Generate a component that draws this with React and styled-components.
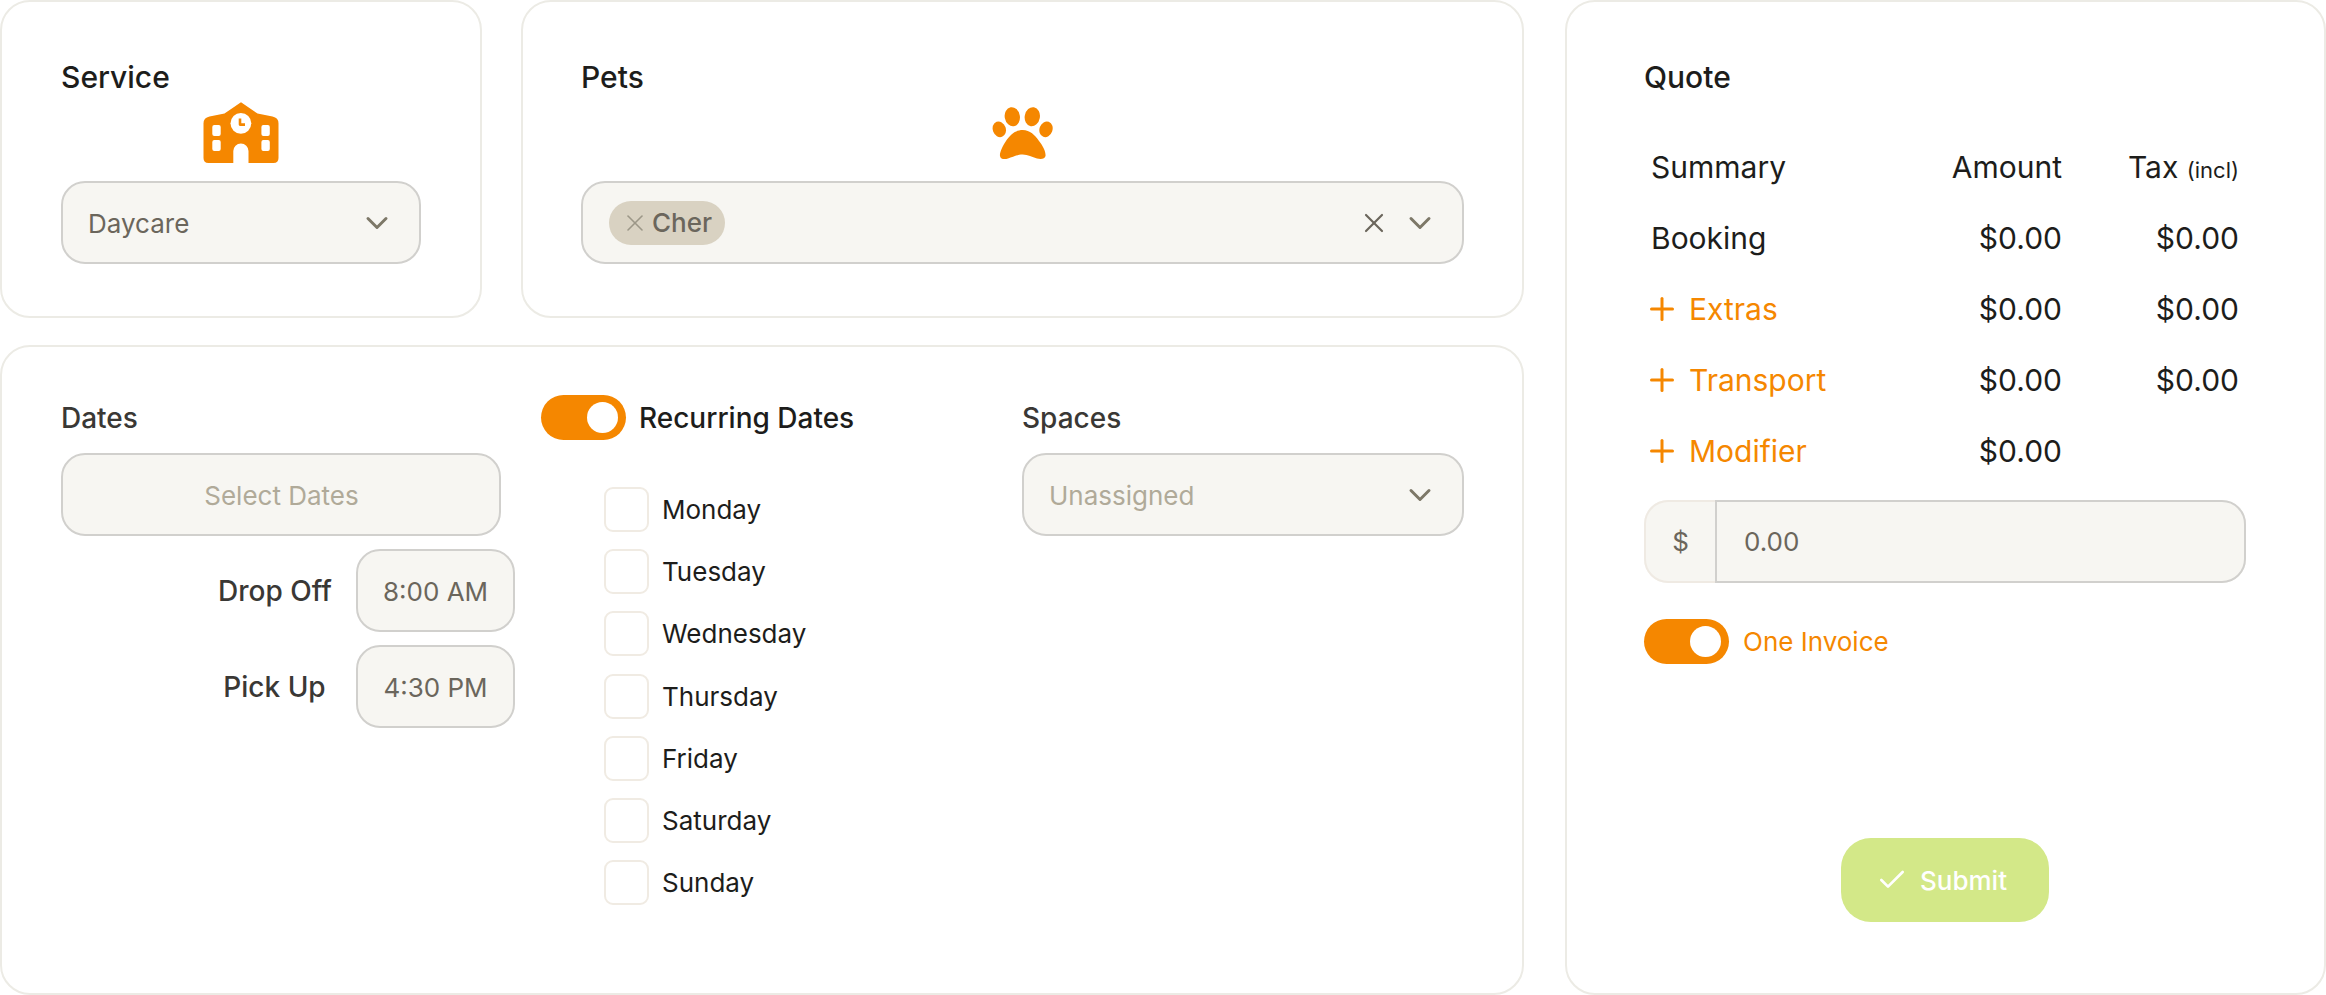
import styled, { createGlobalStyle } from "styled-components";
import { ChevronDown, X, Plus, Check } from "lucide-react";

const days = ["Monday", "Tuesday", "Wednesday", "Thursday", "Friday", "Saturday", "Sunday"];

const quoteRows = [
    { label: "Booking", amount: "$0.00", tax: "$0.00" },
    { label: "Extras", amount: "$0.00", tax: "$0.00", add: true },
    { label: "Transport", amount: "$0.00", tax: "$0.00", add: true },
    { label: "Modifier", amount: "$0.00", add: true },
];

function SchoolIcon() {
    return (
        <svg width="76" height="61" viewBox="0 0 76 61">
            <path
                fill="#f58700"
                d="M38 0.3 L54.5 11.6 L69.5 14.6 Q75.5 15.8 75.5 21.5 V56 Q75.5 61 70.5 61 H45.5 V49 A7.6 7.6 0 0 0 30.3 49 V61 H5.5 Q0.5 61 0.5 56 V21.5 Q0.5 15.8 6.5 14.6 L21.5 11.6 Z"
            />
            <circle cx="37.9" cy="21.3" r="10.4" fill="#fff" />
            <path d="M37 16.5 V22.6 H42" fill="none" stroke="#f58700" strokeWidth="2.6" strokeLinejoin="round" />
            <rect x="9.3" y="23" width="8.4" height="11" rx="2" fill="#fff" />
            <rect x="9.3" y="38" width="8.4" height="11" rx="2" fill="#fff" />
            <rect x="58.4" y="23" width="8.4" height="11" rx="2" fill="#fff" />
            <rect x="58.4" y="38" width="8.4" height="11" rx="2" fill="#fff" />
        </svg>
    );
}

function PawIcon() {
    return (
        <svg width="62" height="54" viewBox="12 15 62 54" fill="#f58700">
            <ellipse cx="32.3" cy="25.7" rx="7.6" ry="9.6" transform="rotate(-10 32.3 25.7)" />
            <ellipse cx="52.3" cy="25.7" rx="7.6" ry="9.6" transform="rotate(10 52.3 25.7)" />
            <ellipse cx="19.3" cy="38.3" rx="6.5" ry="8" transform="rotate(-20 19.3 38.3)" />
            <ellipse cx="66" cy="38.3" rx="6.5" ry="8" transform="rotate(20 66 38.3)" />
            <path d="M42.7 39 C35 39 30 44 26 50 C22 56 19.5 62 20 65 C20.5 68.5 25 68.5 28 67.5 C33 66 37 63.5 42.7 63.5 C48 63.5 52 66 57 67.5 C61 68.5 65 68 65.5 65 C66 61 63 55 59 50 C55 44 50 39 42.7 39 Z" />
        </svg>
    );
}

export default function App() {
    return (
        <>
            <GlobalStyle />
            <Page>
                <LeftColumn>
                    <TopRow>
                        <Card>
                            <Title>Service</Title>
                            <IconSlot><SchoolIcon /></IconSlot>
                            <Field>
                                <span>Daycare</span>
                                <Chevron size={36} strokeWidth={2} />
                            </Field>
                        </Card>
                        <Card>
                            <Title>Pets</Title>
                            <IconSlot><PawIcon /></IconSlot>
                            <Field $tag>
                                <Tag><X size={28} strokeWidth={1.4} />Cher</Tag>
                                <FieldActions>
                                    <ClearIcon size={32} strokeWidth={1.6} />
                                    <Chevron size={36} strokeWidth={2} />
                                </FieldActions>
                            </Field>
                        </Card>
                    </TopRow>
                    <DatesCard>
                        <DatesColumn>
                            <FieldLabel>Dates</FieldLabel>
                            <Field $center $placeholder $width="440px">Select Dates</Field>
                            <TimeRow>
                                <TimeLabel>Drop Off</TimeLabel>
                                <TimeInput>8:00 AM</TimeInput>
                            </TimeRow>
                            <TimeRow>
                                <TimeLabel>Pick Up</TimeLabel>
                                <TimeInput>4:30 PM</TimeInput>
                            </TimeRow>
                        </DatesColumn>
                        <RecurringColumn>
                            <ToggleRow>
                                <Toggle><Knob /></Toggle>
                                <RecurringLabel>Recurring Dates</RecurringLabel>
                            </ToggleRow>
                            <DayList>
                                {days.map((day) => (
                                    <DayRow key={day}>
                                        <Checkbox />
                                        {day}
                                    </DayRow>
                                ))}
                            </DayList>
                        </RecurringColumn>
                        <SpacesColumn>
                            <FieldLabel>Spaces</FieldLabel>
                            <Field $placeholder>
                                <span>Unassigned</span>
                                <Chevron size={36} strokeWidth={2} />
                            </Field>
                        </SpacesColumn>
                    </DatesCard>
                </LeftColumn>
                <QuoteCard>
                    <Title>Quote</Title>
                    <QuoteTable>
                        <QuoteRow>
                            <span>Summary</span>
                            <Amount>Amount</Amount>
                            <Amount>Tax <small>(incl)</small></Amount>
                        </QuoteRow>
                        {quoteRows.map((row) => (
                            <QuoteRow key={row.label}>
                                {row.add ? (
                                    <AddLink><Plus size={36} strokeWidth={2} />{row.label}</AddLink>
                                ) : (
                                    <span>{row.label}</span>
                                )}
                                <Amount>{row.amount}</Amount>
                                <Amount>{row.tax}</Amount>
                            </QuoteRow>
                        ))}
                    </QuoteTable>
                    <MoneyInput>
                        <MoneyAddon>$</MoneyAddon>
                        <MoneyValue>0.00</MoneyValue>
                    </MoneyInput>
                    <InvoiceRow>
                        <Toggle><Knob /></Toggle>
                        One Invoice
                    </InvoiceRow>
                    <SubmitButton><Check size={32} strokeWidth={2} />Submit</SubmitButton>
                </QuoteCard>
            </Page>
        </>
    );
}

const GlobalStyle = createGlobalStyle`
    html, body {
        margin: 0;
        padding: 0;
        background: #ffffff;
    }
    * {
        box-sizing: border-box;
    }
    body {
        font-family: "Inter", "Liberation Sans", sans-serif;
    }
`;

const Page = styled.div`
    display: grid;
    grid-template-columns: 1524px 761px;
    column-gap: 41px;
    height: 995px;
`;

const LeftColumn = styled.div`
    display: flex;
    flex-direction: column;
    gap: 27px;
`;

const TopRow = styled.div`
    display: grid;
    grid-template-columns: 482px 1fr;
    column-gap: 39px;
`;

const Card = styled.section`
    border: 2px solid #ecebe5;
    border-radius: 30px;
    background: #fff;
    height: 318px;
    padding: 53px 58px 0;

    &:first-child {
        padding: 53px 59px;
    }
`;

const Title = styled.h2`
    margin: 0;
    font-size: 30px;
    line-height: 45px;
    font-weight: 500;
    color: #1d1d1b;
`;

const IconSlot = styled.div`
    display: flex;
    justify-content: center;
    align-items: center;
    height: 61px;
    margin: 2px 0 18px;
`;

const Field = styled.div`
    display: flex;
    align-items: center;
    justify-content: ${(p) => (p.$center ? "center" : "space-between")};
    width: ${(p) => p.$width || "100%"};
    height: 83px;
    padding: ${(p) => (p.$tag ? "0 24px 0 26px" : "2px 24px 0 25px")};
    background: #f7f6f2;
    border: 2px solid #d1d0cd;
    border-radius: 24px;
    font-size: 26px;
    color: ${(p) => (p.$placeholder ? "#b0aa99" : "#6b665c")};

    svg {
        margin-top: ${(p) => (p.$tag ? "0" : "-2px")};
    }
`;

const Chevron = styled(ChevronDown)`
    color: #7d7868;
    flex-shrink: 0;
`;

const ClearIcon = styled(X)`
    color: #6b665c;
`;

const FieldActions = styled.div`
    display: flex;
    align-items: center;
    gap: 12px;
`;

const Tag = styled.div`
    display: flex;
    align-items: center;
    gap: 3px;
    height: 44px;
    padding: 0 13px 0 12px;
    border-radius: 22px;
    background: #d9d2c2;
    color: #6b665c;
    font-size: 26px;
    font-weight: 500;

    svg {
        color: #9c9788;
    }
`;

const DatesCard = styled.section`
    flex: 1;
    display: grid;
    grid-template-columns: 454px 455px 442px;
    column-gap: 26px;
    border: 2px solid #ecebe5;
    border-radius: 30px;
    padding: 48px 58px 0 59px;
    align-content: start;
`;

const DatesColumn = styled.div`
    display: flex;
    flex-direction: column;
    gap: 13px;
`;

const FieldLabel = styled.div`
    padding-top: 1px;
    font-size: 28px;
    line-height: 45px;
    height: 45px;
    font-weight: 500;
    color: #3a3835;
`;

const TimeRow = styled.div`
    display: flex;
    justify-content: flex-end;
    align-items: center;
    gap: 25px;
`;

const TimeLabel = styled.div`
    width: 113px;
    text-align: center;
    white-space: nowrap;
    font-size: 28px;
    font-weight: 500;
    color: #3a3835;
`;

const TimeInput = styled.div`
    display: flex;
    align-items: center;
    justify-content: center;
    width: 159px;
    height: 83px;
    padding-top: 1px;
    background: #f7f6f2;
    border: 2px solid #d1d0cd;
    border-radius: 24px;
    font-size: 26px;
    color: #6b665c;
`;

const RecurringColumn = styled.div`
    display: flex;
    flex-direction: column;
`;

const ToggleRow = styled.div`
    display: flex;
    align-items: center;
    gap: 13px;
`;

const Toggle = styled.div`
    display: flex;
    justify-content: flex-end;
    align-items: center;
    width: 85px;
    height: 45px;
    padding-right: 8px;
    border-radius: 23px;
    background: #f58700;
    flex-shrink: 0;
`;

const Knob = styled.div`
    width: 31px;
    height: 31px;
    border-radius: 50%;
    background: #fff;
`;

const RecurringLabel = styled.div`
    padding-top: 1px;
    font-size: 28px;
    font-weight: 500;
    color: #1d1d1b;
`;

const DayList = styled.div`
    display: flex;
    flex-direction: column;
    gap: 18px;
    margin: 47px 0 0 63px;
`;

const DayRow = styled.div`
    display: flex;
    align-items: center;
    gap: 13px;
    height: 44.3px;
    font-size: 26px;
    color: #1d1d1b;
`;

const Checkbox = styled.div`
    width: 45px;
    height: 45px;
    border: 2px solid #f0ebe3;
    border-radius: 9px;
    background: #fff;
`;

const SpacesColumn = styled.div`
    display: flex;
    flex-direction: column;
    gap: 13px;
`;

const QuoteCard = styled.section`
    display: flex;
    flex-direction: column;
    border: 2px solid #ecebe5;
    border-radius: 30px;
    padding: 53px 78px 71px 77px;
`;

const QuoteTable = styled.div`
    margin: 31px 0 14px;
    padding: 0 7px;
`;

const QuoteRow = styled.div`
    display: grid;
    grid-template-columns: 1fr 175px 177px;
    align-items: center;
    height: 71px;
    font-size: 30px;
    color: #1d1d1b;
`;

const Amount = styled.div`
    text-align: right;
    white-space: nowrap;

    small {
        font-size: 22px;
    }
`;

const AddLink = styled.div`
    display: flex;
    align-items: center;
    gap: 9px;
    margin-left: -7px;
    color: #f58700;
`;

const MoneyInput = styled.div`
    display: flex;
    height: 83px;
    border-radius: 24px;
    background: #f7f6f2;
    font-size: 26px;
    color: #6b665c;
`;

const MoneyAddon = styled.div`
    display: flex;
    align-items: center;
    justify-content: center;
    width: 71px;
    border: 2px solid #efeae3;
    border-right: none;
    border-radius: 24px 0 0 24px;
`;

const MoneyValue = styled.div`
    flex: 1;
    display: flex;
    align-items: center;
    padding-left: 27px;
    border: 2px solid #d1d0cd;
    border-radius: 0 24px 24px 0;
`;

const InvoiceRow = styled.div`
    display: flex;
    align-items: center;
    gap: 14px;
    margin-top: 36px;
    font-size: 26px;
    color: #f58700;
`;

const SubmitButton = styled.button`
    display: flex;
    align-items: center;
    justify-content: center;
    gap: 12px;
    align-self: center;
    width: 208px;
    height: 84px;
    margin-top: auto;
    padding: 0 7px 0 0;
    border: none;
    border-radius: 30px;
    background: #d3e888;
    color: #fff;
    font-family: inherit;
    font-size: 26px;
    font-weight: 500;
`;
